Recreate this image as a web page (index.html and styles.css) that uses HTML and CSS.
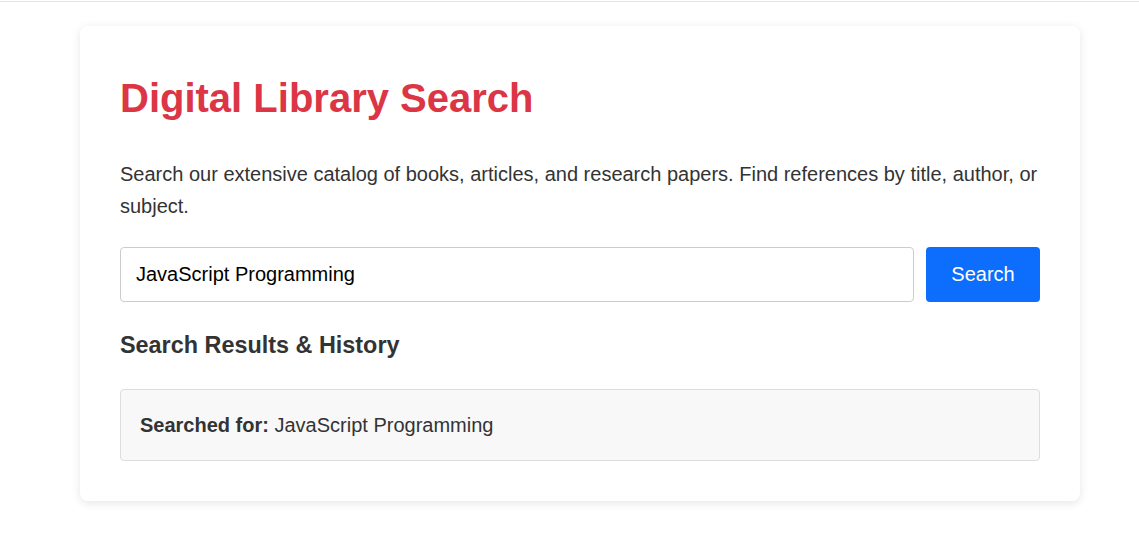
FILE: index.html
```html
<!DOCTYPE html>
<html lang="en">
<head>
<meta charset="utf-8">
<title>Digital Library Search</title>
<link rel="stylesheet" href="styles.css">
</head>
<body>
<div class="topline"></div>
<main class="page">
  <section class="card">
    <h1 class="title">Digital Library Search</h1>
    <p class="intro">Search our extensive catalog of books, articles, and research papers. Find references by title, author, or subject.</p>
    <form class="search-row" onsubmit="return false;">
      <input class="search-input" type="text" value="JavaScript Programming">
      <button class="search-btn" type="submit">Search</button>
    </form>
    <h2 class="results-title">Search Results &amp; History</h2>
    <div class="result-box"><strong>Searched for:</strong> JavaScript Programming</div>
  </section>
</main>
</body>
</html>
```

FILE: styles.css
```css
* { box-sizing: border-box; }
html, body { margin: 0; padding: 0; background: #fff; }
body {
  font-family: "Liberation Sans", Arial, sans-serif;
  font-size: 20px;
  color: #333;
}
.topline {
  margin-top: 1px;
  height: 1px;
  background: #e5e5e5;
}
.page {
  padding: 24px 59px 30px 80px;
}
.card {
  width: 1000px;
  background: #fff;
  border-radius: 8px;
  box-shadow: 0 2px 10px rgba(0, 0, 0, 0.1);
  padding: 40px;
}
.title {
  margin: 9px 0 0;
  font-size: 40px;
  font-weight: bold;
  color: #dc3545;
  line-height: 46px;
}
.intro {
  margin: 37px 0 0;
  font-size: 20px;
  line-height: 32px;
  color: #333;
}
.search-row {
  display: flex;
  gap: 12px;
  margin: 25px 0 0;
}
.search-input {
  flex: 1;
  height: 55px;
  padding: 0 15px;
  font-family: "Liberation Sans", Arial, sans-serif;
  font-size: 20px;
  color: #000;
  border: 1px solid #ccc;
  border-radius: 4px;
  outline: none;
}
.search-btn {
  width: 114px;
  height: 55px;
  font-family: "Liberation Sans", Arial, sans-serif;
  font-size: 20px;
  color: #fff;
  background: #0d6efd;
  border: none;
  border-radius: 4px;
}
.results-title {
  margin: 30px 0 0;
  font-size: 23.4px;
  line-height: 27px;
  font-weight: bold;
  color: #333;
}
.result-box {
  margin-top: 30px;
  padding: 23.5px 19px;
  background: #f8f8f8;
  border: 1px solid #ddd;
  border-radius: 4px;
  font-size: 20px;
  line-height: 23px;
  color: #333;
}
.result-box strong { font-weight: bold; }
```
